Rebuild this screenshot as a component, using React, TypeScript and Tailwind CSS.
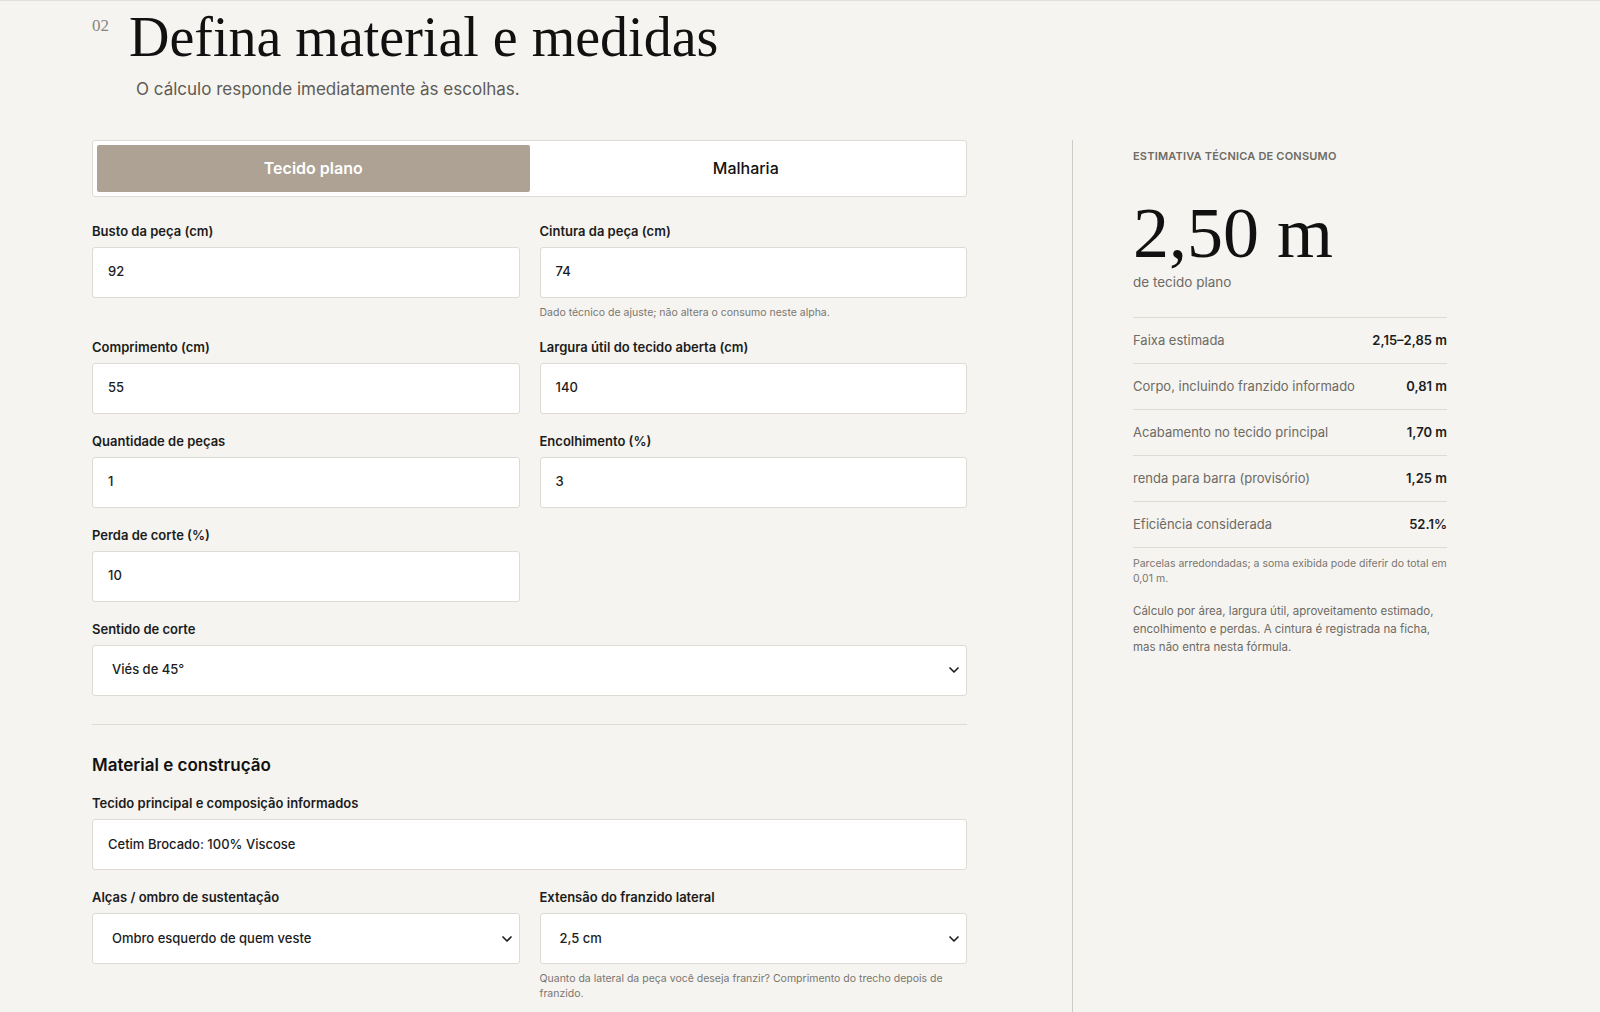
import { ChevronDown } from 'lucide-react';

function Field({ label, value, hint }: { label: string; value: string; hint?: string }) {
    return (
        <div className="flex flex-col">
            <label className="text-[13px] font-semibold text-[#1c1c1c] mb-[9px] h-[16px]">{label}</label>
            <div className="h-[51px] bg-white border border-[#dedbd5] rounded-[3px] px-[15px] flex items-center text-[13px] font-medium text-[#1c1c1c]">{value}</div>
            {hint && <p className="text-[10.5px] text-[#7a7670] mt-[7px] leading-[15px]">{hint}</p>}
        </div>
    );
}

function Select({ label, value, hint }: { label: string; value: string; hint?: string }) {
    return (
        <div className="flex flex-col">
            <label className="text-[13px] font-semibold text-[#1c1c1c] mb-[9px] h-[16px]">{label}</label>
            <div className="h-[51px] bg-white border border-[#dedbd5] rounded-[3px] pl-[19px] pr-[4px] flex items-center justify-between text-[13px] font-medium text-[#1c1c1c]">
                {value}
                <ChevronDown className="w-4 h-4" strokeWidth={2.5} />
            </div>
            {hint && <p className="text-[10.5px] text-[#7a7670] mt-[7px] leading-[15px]">{hint}</p>}
        </div>
    );
}

const rows = [
    ['Faixa estimada', '2,15–2,85 m'],
    ['Corpo, incluindo franzido informado', '0,81 m'],
    ['Acabamento no tecido principal', '1,70 m'],
    ['renda para barra (provisório)', '1,25 m'],
    ['Eficiência considerada', '52.1%'],
];

export default function App() {
    const serif = { fontFamily: '"Liberation Serif", "DejaVu Serif", serif' };
    return (
        <div className="min-h-[1012px] bg-[#f5f4f0] border-t border-[#e2e0db] overflow-hidden" style={{ fontFamily: 'Inter, "Noto Sans", sans-serif' }}>
            <header className="pl-[92px] pt-[4px]">
                <div className="flex items-start gap-[20px]">
                    <span className="text-[17px] text-[#8a857d] mt-[8px]" style={serif}>02</span>
                    <h1 className="text-[56px] leading-[64px] text-[#111]" style={serif}>Defina material e medidas</h1>
                </div>
                <p className="ml-[44px] mt-[8px] text-[17px] text-[#5f5b55]">O cálculo responde imediatamente às escolhas.</p>
            </header>

            <div className="flex mt-[37px]">
                <div className="w-[875px] ml-[92px] flex flex-col">
                    <div className="h-[57px] bg-white border border-[#dedbd5] rounded-[3px] p-[4px] flex">
                        <div className="flex-1 bg-[#ada293] rounded-[2px] flex items-center justify-center text-white font-semibold text-[16px]">Tecido plano</div>
                        <div className="flex-1 flex items-center justify-center text-[#111] font-medium text-[16px]">Malharia</div>
                    </div>

                    <div className="grid grid-cols-2 gap-x-[20px] mt-[25px]">
                        <Field label="Busto da peça (cm)" value="92" />
                        <Field label="Cintura da peça (cm)" value="74" hint="Dado técnico de ajuste; não altera o consumo neste alpha." />
                    </div>
                    <div className="grid grid-cols-2 gap-x-[20px] gap-y-[18px] mt-[18px]">
                        <Field label="Comprimento (cm)" value="55" />
                        <Field label="Largura útil do tecido aberta (cm)" value="140" />
                        <Field label="Quantidade de peças" value="1" />
                        <Field label="Encolhimento (%)" value="3" />
                        <Field label="Perda de corte (%)" value="10" />
                        <div />
                    </div>
                    <div className="mt-[18px]">
                        <Select label="Sentido de corte" value="Viés de 45°" />
                    </div>
                    <div className="border-t border-[#dedbd5] mt-[28px]" />
                    <h2 className="text-[17px] font-semibold text-[#111] mt-[28px]">Material e construção</h2>
                    <div className="mt-[16px]">
                        <Field label="Tecido principal e composição informados" value="Cetim Brocado: 100% Viscose" />
                    </div>
                    <div className="grid grid-cols-2 gap-x-[20px] mt-[18px]">
                        <Select label="Alças / ombro de sustentação" value="Ombro esquerdo de quem veste" />
                        <Select label="Extensão do franzido lateral" value="2,5 cm" hint="Quanto da lateral da peça você deseja franzir? Comprimento do trecho depois de franzido." />
                    </div>
                </div>

                <div className="ml-[105px] border-l border-[#cfccc6] min-h-[880px] pl-[60px] w-[375px]">
                    <p className="text-[11px] font-semibold tracking-[0.2px] text-[#6e6a64] mt-[8px]">ESTIMATIVA TÉCNICA DE CONSUMO</p>
                    <p className="text-[72px] leading-[74px] text-[#111] mt-[32px]" style={serif}>2,50 m</p>
                    <p className="text-[13.5px] text-[#6e6a64] mt-[2px]">de tecido plano</p>
                    <div className="border-t border-[#dedbd5] mt-[25px]">
                        {rows.map(([k, v]) => (
                            <div key={k} className="h-[46px] border-b border-[#dedbd5] flex items-center justify-between text-[13px]">
                                <span className="text-[#6e6a64]">{k}</span>
                                <span className="font-semibold text-[#1c1c1c]">{v}</span>
                            </div>
                        ))}
                    </div>
                    <p className="text-[10.5px] leading-[15px] text-[#7a7670] mt-[8px]">Parcelas arredondadas; a soma exibida pode diferir do total em 0,01 m.</p>
                    <p className="text-[11.5px] leading-[18px] text-[#6e6a64] mt-[16px]">Cálculo por área, largura útil, aproveitamento estimado, encolhimento e perdas. A cintura é registrada na ficha, mas não entra nesta fórmula.</p>
                </div>
            </div>
        </div>
    );
}
